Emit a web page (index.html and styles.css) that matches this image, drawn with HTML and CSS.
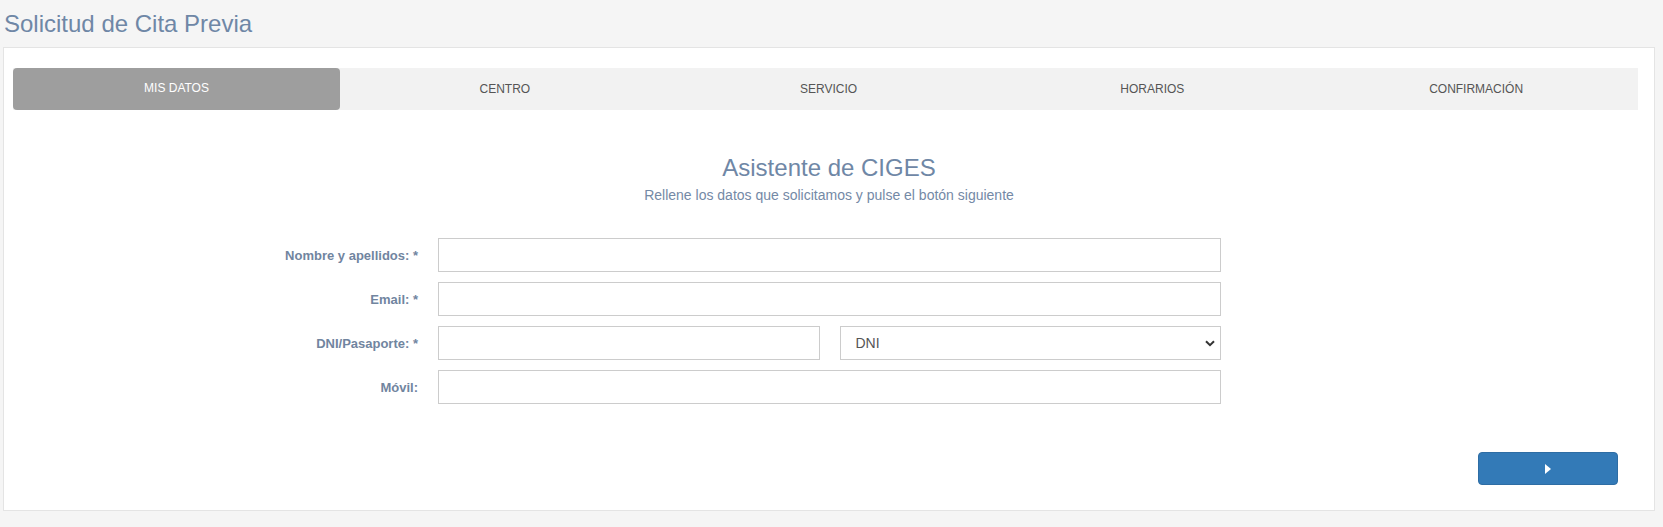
FILE: index.html
```html
<!DOCTYPE html>
<html lang="es">
<head>
<meta charset="utf-8">
<title>Solicitud de Cita Previa</title>
<link rel="stylesheet" href="styles.css">
</head>
<body>
<h1 class="page-title">Solicitud de Cita Previa</h1>
<div class="panel">
  <div class="steps">
    <div class="step active">MIS DATOS</div>
    <div class="step">CENTRO</div>
    <div class="step">SERVICIO</div>
    <div class="step">HORARIOS</div>
    <div class="step">CONFIRMACIÓN</div>
  </div>
  <div class="intro">
    <h2 class="intro-title">Asistente de CIGES</h2>
    <p class="intro-text">Rellene los datos que solicitamos y pulse el botón siguiente</p>
  </div>
  <form class="form">
    <label class="label" for="nombre">Nombre y apellidos: *</label>
    <input class="input" id="nombre" type="text">
    <label class="label" for="email">Email: *</label>
    <input class="input" id="email" type="text">
    <label class="label" for="dni">DNI/Pasaporte: *</label>
    <div class="split">
      <input class="input" id="dni" type="text">
      <div class="select-wrap">
        <select class="select">
          <option>DNI</option>
          <option>Pasaporte</option>
        </select>
        <svg class="chevron" width="10" height="7" viewBox="0 0 10 7"><path d="M1 1.2 L5 5.2 L9 1.2" fill="none" stroke="#333" stroke-width="2"/></svg>
      </div>
    </div>
    <label class="label" for="movil">Móvil:</label>
    <input class="input" id="movil" type="text">
  </form>
  <div class="actions">
    <button class="btn-next" type="button" aria-label="Siguiente">
      <svg width="6" height="10" viewBox="0 0 6 10"><path d="M0 0 L6 5 L0 10 Z" fill="#fff"/></svg>
    </button>
  </div>
</div>
</body>
</html>
```
FILE: styles.css
```css
html, body {
  margin: 0;
  padding: 0;
}
body {
  background: #f5f5f5;
  font-family: "Liberation Sans", Arial, sans-serif;
  color: #555;
}
.page-title {
  margin: 0;
  padding: 10px 0 0 4px;
  font-size: 24px;
  line-height: 27px;
  font-weight: normal;
  color: #6f87a6;
}
.panel {
  margin: 10px 8px 0 3px;
  background: #fff;
  border: 1px solid #e4e4e4;
  padding: 20px 16px 25px 9px;
}
.steps {
  display: grid;
  grid-template-columns: 330px repeat(4, 1fr);
  background: #f2f2f2;
  height: 42px;
}
.step {
  display: flex;
  align-items: center;
  justify-content: center;
  font-size: 12px;
  color: #555;
}
.step.active {
  background: #9e9e9e;
  color: #fff;
  border-radius: 4px;
  margin-right: 3px;
  padding-bottom: 3px;
}
.intro {
  text-align: center;
  margin-top: 45px;
  margin-left: -9px;
  margin-right: -16px;
}
.intro-title {
  margin: 0;
  font-size: 24px;
  line-height: 26px;
  font-weight: normal;
  color: #6f87a6;
}
.intro-text {
  margin: 4px 0 0;
  font-size: 14px;
  line-height: 20px;
  color: #7489a6;
}
.form {
  display: grid;
  grid-template-columns: 405px 783px;
  column-gap: 20px;
  row-gap: 10px;
  align-items: center;
  margin-top: 33px;
}
.label {
  text-align: right;
  font-size: 13px;
  font-weight: bold;
  color: #71859f;
}
.input {
  box-sizing: border-box;
  height: 34px;
  width: 100%;
  margin: 0;
  border: 1px solid #cccccc;
  border-radius: 0;
  background: #fff;
  padding: 6px 12px;
  font-family: inherit;
  font-size: 14px;
  color: #555;
}
.split {
  display: grid;
  grid-template-columns: 1fr 1fr;
  column-gap: 20px;
}
.select-wrap {
  position: relative;
}
.select {
  box-sizing: border-box;
  appearance: none;
  -webkit-appearance: none;
  width: 100%;
  height: 34px;
  margin: 0;
  border: 1px solid #cccccc;
  border-radius: 0;
  background: #fff;
  padding: 0 30px 0 15px;
  font-family: inherit;
  font-size: 14px;
  color: #555;
}
.chevron {
  position: absolute;
  right: 6px;
  top: 14px;
  pointer-events: none;
}
.actions {
  display: flex;
  justify-content: flex-end;
  margin-top: 48px;
  padding-right: 20px;
}
.btn-next {
  width: 140px;
  height: 33px;
  background: #337ab7;
  border: 1px solid #2e6da4;
  border-radius: 4px;
  display: flex;
  align-items: center;
  justify-content: center;
  padding: 0;
  cursor: pointer;
}
```
